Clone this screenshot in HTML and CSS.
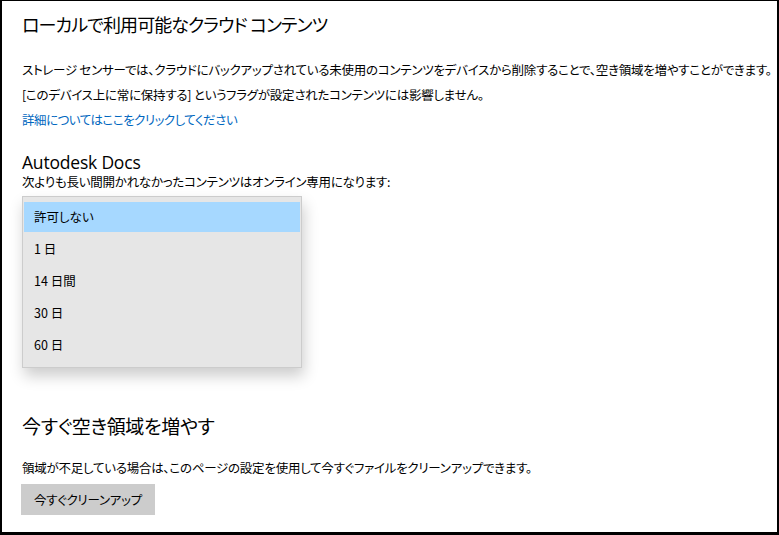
FILE: index.html
```html
<!DOCTYPE html>
<html lang="ja">
<head>
	<meta name="viewport" content="width=device-width, initial-scale=1">
	<title>ストレージ センサー</title>
	<link rel="stylesheet" href="styles.css">
</head>
<body>
<div class="frame">
	<h1 class="title">ローカルで利用可能なクラウド コンテンツ</h1>
	<p class="text first">ストレージ センサーでは、クラウドにバックアップされている未使用のコンテンツをデバイスから削除することで、空き領域を増やすことができます。</p>
	<p class="text">[このデバイス上に常に保持する] というフラグが設定されたコンテンツには影響しません。</p>
	<a class="link" href="#">詳細についてはここをクリックしてください</a>

	<div class="provider">
		<h2>Autodesk Docs</h2>
		<p class="text label">次よりも長い間開かれなかったコンテンツはオンライン専用になります:</p>
		<div class="select-area">
			<ul class="dropdown">
				<li class="selected">許可しない</li>
				<li>1 日</li>
				<li>14 日間</li>
				<li>30 日</li>
				<li>60 日</li>
			</ul>
		</div>
	</div>

	<h1 class="sub">今すぐ空き領域を増やす</h1>
	<p class="text">領域が不足している場合は、このページの設定を使用して今すぐファイルをクリーンアップできます。</p>
	<button class="btn">今すぐクリーンアップ</button>
</div>
</body>
</html>
```

FILE: styles.css
```css
* {
	box-sizing: border-box;
	margin: 0;
	padding: 0;
}

html, body {
	height: 100%;
}

body {
	font-family: 'Noto Sans CJK JP', 'Noto Sans', sans-serif;
	font-feature-settings: "palt";
	color: #000;
	background: #000;
	padding: 1px 2px 3px 2px;
}

.frame {
	background: #fff;
	height: 100%;
	padding: 11px 0 0 20px;
	display: flex;
	flex-direction: column;
	align-items: flex-start;
}

h1 {
	font-weight: normal;
	font-size: 19px;
	line-height: 24px;
	letter-spacing: -0.3px;
}

h1.title {
	font-size: 18px;
	letter-spacing: -0.9px;
}

.text {
	font-size: 12.5px;
	line-height: 25px;
	letter-spacing: -0.25px;
}

.text.first {
	margin-top: 21px;
}

.link {
	font-size: 12.5px;
	line-height: 25px;
	letter-spacing: -0.5px;
	color: #0067c0;
	text-decoration: none;
}

.provider {
	margin-top: 20px;
	width: 100%;
}

.provider h2 {
	font-family: 'Open Sans', 'Noto Sans', sans-serif;
	font-weight: normal;
	font-size: 17.5px;
	line-height: 20px;
	letter-spacing: -0.2px;
}

.provider .label {
	line-height: 18px;
	margin-top: 1px;
}

.select-area {
	position: relative;
	height: 222px;
}

.dropdown {
	position: absolute;
	left: 0;
	top: 5px;
	width: 280px;
	list-style: none;
	background: #e6e6e6;
	border: 1px solid #cccccc;
	padding: 5px 1px;
	box-shadow: 2px 8px 14px rgba(0, 0, 0, 0.2);
}

.dropdown li {
	font-size: 12.5px;
	height: 32px;
	line-height: 30px;
	padding-left: 10px;
}

.dropdown li.selected {
	background: #a6d8ff;
	height: 30px;
	margin-bottom: 2px;
}

h1.sub {
	margin-top: 1px;
}

.sub + .text {
	margin-top: 17px;
}

.btn {
	margin-top: 4px;
	margin-left: -1px;
	font-family: inherit;
	font-feature-settings: "palt";
	font-size: 12.5px;
	letter-spacing: -0.25px;
	background: #cccccc;
	border: none;
	width: 134px;
	height: 31px;
	color: #000;
}
```
